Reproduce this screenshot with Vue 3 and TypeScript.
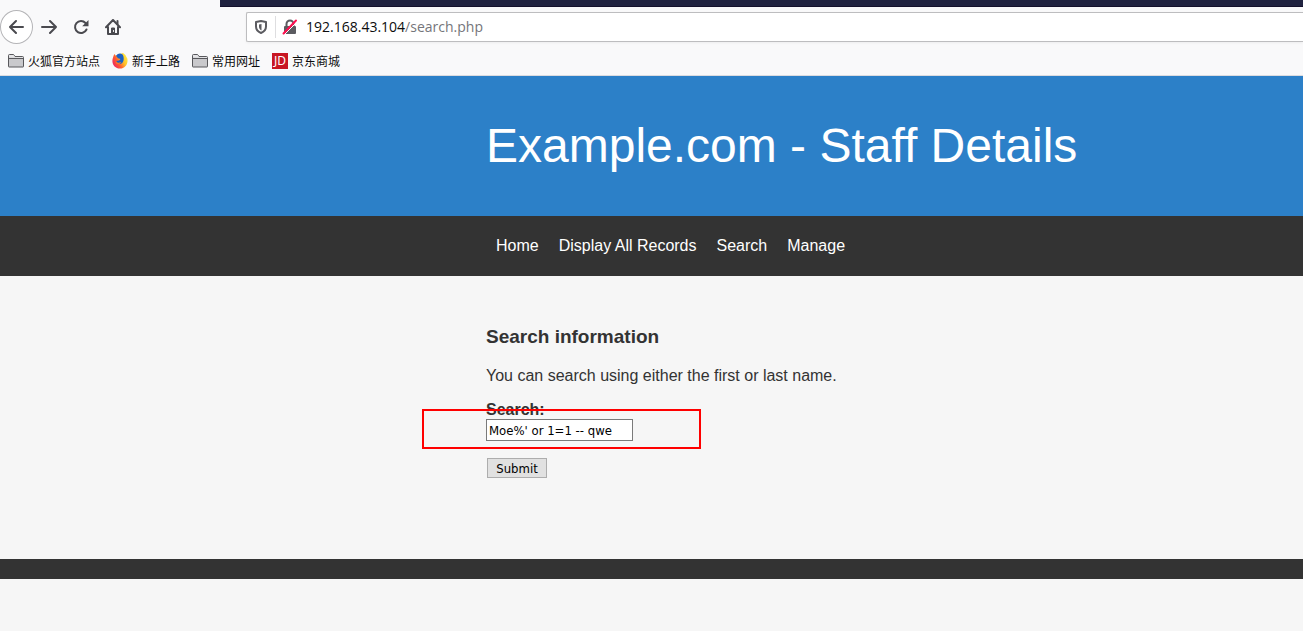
<script setup lang="ts">
import { ref } from 'vue'

interface Bookmark {
  label: string
  icon: 'folder' | 'firefox' | 'jd'
}

const bookmarks: Bookmark[] = [
  { label: '火狐官方站点', icon: 'folder' },
  { label: '新手上路', icon: 'firefox' },
  { label: '常用网址', icon: 'folder' },
  { label: '京东商城', icon: 'jd' },
]

const links: string[] = ['Home', 'Display All Records', 'Search', 'Manage']

const query = ref("Moe%' or 1=1 -- qwe")
</script>

<template>
  <div class="browser">
    <div class="tabstrip"><div class="tab"></div></div>
    <div class="toolbar">
      <div class="controls">
        <button class="tool back" type="button" aria-label="Back">
          <svg width="16" height="16" viewBox="0 0 16 16" fill="none" stroke="#4a4a4f" stroke-width="2" stroke-linecap="round" stroke-linejoin="round">
            <path d="M14 8H1M7 2 1 8l6 6" />
          </svg>
        </button>
        <button class="tool" type="button" aria-label="Forward">
          <svg width="16" height="16" viewBox="0 0 16 16" fill="none" stroke="#4a4a4f" stroke-width="2" stroke-linecap="round" stroke-linejoin="round">
            <path d="M1 8h14M9 2l6 6-6 6" />
          </svg>
        </button>
        <button class="tool" type="button" aria-label="Reload">
          <svg width="16" height="16" viewBox="0 0 16 16">
            <path d="M13.5 10.5A6 6 0 1 1 12.5 4" fill="none" stroke="#4a4a4f" stroke-width="2" stroke-linecap="round" />
            <path d="M15.500 1v6.300H9.200z" fill="#4a4a4f" />
          </svg>
        </button>
        <button class="tool" type="button" aria-label="Home">
          <svg width="16" height="16" viewBox="0 0 16 16" fill="none" stroke="#4a4a4f" stroke-width="2" stroke-linecap="round" stroke-linejoin="round">
            <path d="M1 8.200 8 1l7 7.200M3 8v7h10V8" />
            <path d="M12.500 2v3" />
            <path d="M6.500 15V9h3v6z" fill="#4a4a4f" stroke-width="1" />
            <path d="M8.500 11.500v1" stroke="#f9f9fa" stroke-width="1" />
          </svg>
        </button>
      </div>
      <div class="urlbar">
        <svg class="shield" width="14" height="16" viewBox="0 0 14 16">
          <path d="M7 2 12 3v4.500c0 3-2 5.300-5 6.500-3-1.200-5-3.500-5-6.500V3z" fill="none" stroke="#5b5b60" stroke-width="2" stroke-linejoin="round" />
          <path d="M7.500 5v6.500C5.700 10.500 5 9.200 5 7.500v-2z" fill="#5b5b60" />
        </svg>
        <span class="divider"></span>
        <svg class="lock" width="16" height="16" viewBox="0 0 16 16">
          <path d="M4.500 8V5a3.500 3.500 0 0 1 7 0v3" fill="none" stroke="#5b5b60" stroke-width="2" />
          <rect x="2" y="7" width="12" height="8" rx="1" fill="#5b5b60" />
          <path d="M2 16 15.500 2.500" stroke="#fff" stroke-width="1" />
          <path d="M1.500 14.500 14 1.500" stroke="#ff0f50" stroke-width="2" stroke-linecap="round" />
        </svg>
        <span class="url"><span class="host">192.168.43.104</span>/search.php</span>
      </div>
    </div>
    <div class="bookmarks">
      <a v-for="item in bookmarks" :key="item.label" class="bookmark" href="#">
        <svg v-if="item.icon === 'folder'" width="16" height="16" viewBox="0 0 16 16">
          <path d="M.5 13.500v-11q0-1 1-1H5.500l1.500 2h7.500q1 0 1 1v9q0 .5-.5.500H1q-.5 0-.5-.5z" fill="#c9c9cc" stroke="#58585c" />
          <path d="M1 4.500V2h4.300l1.500 2H15v1z" fill="#e4e4e6" />
          <path d="M1 5.500h14" stroke="#58585c" />
        </svg>
        <svg v-else-if="item.icon === 'firefox'" width="16" height="16" viewBox="0 0 16 16">
          <defs>
            <linearGradient id="flame" x1="1" y1=".2" x2="0" y2=".8">
              <stop offset="0" stop-color="#fff044" />
              <stop offset=".35" stop-color="#ffc22a" />
              <stop offset=".65" stop-color="#ff5a30" />
              <stop offset="1" stop-color="#e8206b" />
            </linearGradient>
          </defs>
          <path d="M1.500 3 2.300 1l1.800 2Q6 .5 9 .8L11 0q3.500 2 4.300 5.500C16.500 11 13 15.500 8 15.500S-.5 11.500.6 6z" fill="url(#flame)" />
          <path d="M4 2.800Q7-.8 10.500 1.500c1 1.500 1.500 3.500 1 6-.5 2.500-2.300 3.700-4.300 3.400-2-.4-3-1.400-2.800-2.900l2.800-.5L8.500 6 6 5.300z" fill="#1b62c4" />
          <path d="M4 8c.5 1.500 2 2 3.500 1.400l1.700-.4c-.5 2-4.200 3.200-5.600.5z" fill="#ff7b22" />
        </svg>
        <svg v-else width="16" height="16" viewBox="0 0 16 16">
          <rect width="16" height="16" fill="#c81623" />
          <text x="8" y="12" text-anchor="middle" class="jd">JD</text>
        </svg>
        <span>{{ item.label }}</span>
      </a>
    </div>
  </div>

  <header class="banner">
    <h1>Example.com - Staff Details</h1>
  </header>
  <nav class="menu">
    <a v-for="link in links" :key="link" href="#">{{ link }}</a>
  </nav>
  <main class="content">
    <h3>Search information</h3>
    <p>You can search using either the first or last name.</p>
    <form @submit.prevent>
      <label for="query">Search:</label>
      <div class="field">
        <input id="query" v-model="query" type="text" />
        <span class="highlight"></span>
      </div>
      <button class="submit" type="submit">Submit</button>
    </form>
  </main>
  <footer class="footer"></footer>
</template>

<style>
body {
  margin: 0;
  background: #f6f6f6;
}
</style>

<style scoped>
* {
  box-sizing: border-box;
}

svg {
  display: block;
  flex: none;
}

.browser {
  background: #f9f9fa;
  border-bottom: 1px solid #dcdce0;
  font-family: "Open Sans", "Noto Sans CJK SC", sans-serif;
}

.tabstrip {
  height: 7px;
  background: #202340;
  border-bottom: 1px solid #14112c;
}

.tab {
  width: 220px;
  height: 7px;
  background: #f9f9fa;
}

.toolbar {
  display: flex;
  align-items: center;
  height: 40px;
}

.controls {
  display: flex;
  align-items: center;
  width: 246px;
}

.tool {
  display: flex;
  align-items: center;
  justify-content: center;
  width: 32px;
  height: 34px;
  padding: 0;
  border: 0;
  background: none;
}

.back {
  width: 33px;
  border: 1px solid #b4b4b7;
  border-radius: 50%;
  background: #fff;
}

.urlbar {
  display: flex;
  flex: 1;
  align-items: center;
  height: 30px;
  padding-left: 7px;
  border: 1px solid #bdbdbf;
  border-right: 0;
  border-radius: 2px 0 0 2px;
  background: #fff;
  box-shadow: 0 1px 3px #0000000d;
}

.divider {
  width: 1px;
  height: 22px;
  margin: 0 6px 0 7px;
  background: #dedee0;
}

.url {
  margin-left: 8px;
  color: #75757a;
  font-size: 14px;
  line-height: 20px;
}

.host {
  color: #0c0c0d;
}

.bookmarks {
  display: flex;
  align-items: center;
  height: 28px;
  gap: 12px;
  padding: 0 8px;
}

.bookmark {
  display: flex;
  align-items: center;
  gap: 4px;
  color: #0c0c0d;
  font-size: 12px;
  line-height: 18px;
  text-decoration: none;
}

.bookmark span {
  padding-top: 2px;
}

.jd {
  fill: #fff;
  font: 12px "Noto Sans", sans-serif;
}

.banner,
.menu,
.content {
  padding-left: 486px;
  font-family: "Liberation Sans", Arial, sans-serif;
}

.banner {
  height: 140px;
  padding-top: 40px;
  background: #2c80c8;
  color: #fff;
}

h1 {
  margin: 0;
  font-size: 48px;
  font-weight: 400;
  line-height: 60px;
}

.menu {
  display: flex;
  align-items: center;
  height: 60px;
  background: #333;
}

.menu a {
  padding: 0 10px;
  color: #fff;
  font-size: 16px;
  line-height: 20px;
  text-decoration: none;
}

.content {
  padding-top: 50px;
  padding-bottom: 81px;
  color: #333;
  font-size: 16px;
  line-height: 20px;
}

h3 {
  margin: 0;
  font-size: 19px;
  line-height: 22px;
}

p {
  margin: 18px 0 14px;
}

label {
  display: block;
  height: 19px;
  font-weight: 700;
}

.field {
  position: relative;
  width: 147px;
}

input,
.submit {
  display: block;
  font-family: "DejaVu Sans Condensed", Tahoma, sans-serif;
  font-size: 13px;
  color: #000;
}

input {
  width: 100%;
  height: 22px;
  padding: 0 2px;
  border: 1px solid #7a7a7a;
  background: #fff;
}

.highlight {
  position: absolute;
  inset: -10px -68px -8px -64px;
  border: 2px solid #f00;
  pointer-events: none;
}

.submit {
  width: 60px;
  height: 20px;
  margin: 17px 0 0 1px;
  padding: 0;
  border: 1px solid #adadad;
  background: #e1e1e1;
}

.footer {
  height: 20px;
  background: #333;
}
</style>
